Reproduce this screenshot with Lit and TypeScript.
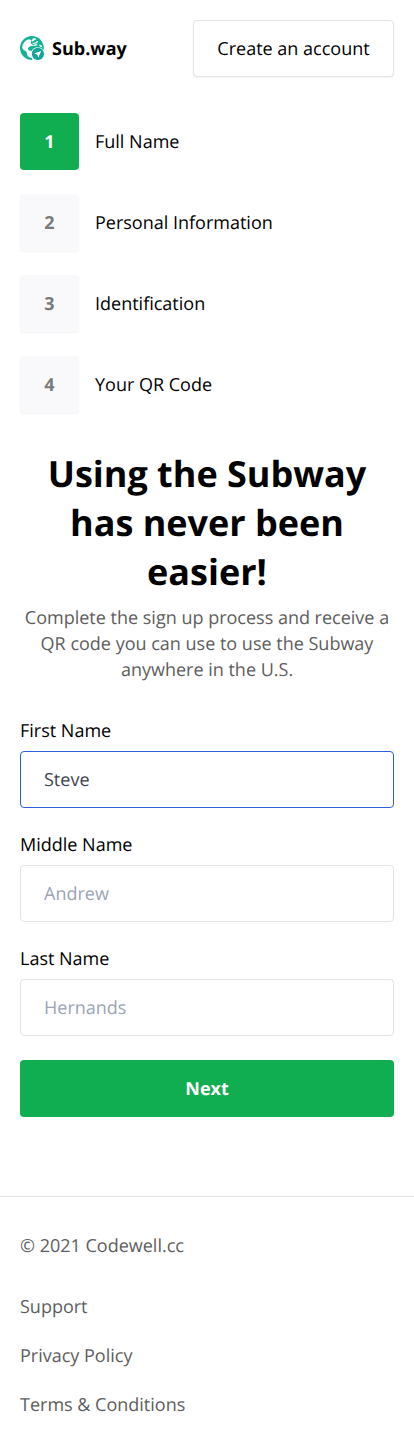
import { LitElement, html, css } from "lit";
import { customElement, state } from "lit/decorators.js";
import { classMap } from "lit/directives/class-map.js";

@customElement("sub-logo")
class SubLogo extends LitElement {
  static styles = css`
    :host {
      display: flex;
      align-items: center;
      gap: 8px;
    }
    .globe {
      display: block;
      width: 24px;
      height: 24px;
      margin-bottom: 1px;
    }
    .name {
      padding-top: 2px;
      font-weight: 700;
    }
  `;

  render() {
    return html`
      <svg class="globe" viewBox="0 0 24 24" aria-hidden="true">
        <path fill="#14b195" d="M12 0A12 12 0 1 0 12 24L12.300 22.600C11.800 21.900 10.800 21.600 9.900 21.500C7.900 20.900 7 19.300 6.900 17.300C6.800 15.800 5.700 15 4.100 14.200C2.500 13.300 1.900 11.700 2.400 10C2.900 7.700 4.100 6.300 5.400 4.900C6.300 4.100 7.600 3.400 8.500 3.400C9.600 3.300 11.300 3.500 11.400 4.300C11 5.600 10.600 6.200 11 7.200C11.500 8.300 13 9.200 14 8.800C15.200 8.200 17 8.200 18.200 8.900C16.900 9.500 15.500 9.400 14.200 9.800C12.300 9.400 10.700 9.800 9 11.100C7.800 12.200 7.700 13.400 8.800 14.300C9.600 14.900 10.800 14.500 11.700 14.900C12.700 12.500 15 11.200 17.700 11.200C20.300 11.200 22.300 12.300 23.600 14.100A12 12 0 0 0 12 0Z"/>
        <path fill="#fff" d="M12.600 2.500L15.200 2.300L16.400 3.200L14.600 3.900L13.200 5.200L11.200 5.500L12.200 4.200ZM17.300 4.800L18.200 5.800L16.900 7.200L13 7.900L12.200 7.100L15.600 6.600ZM18.800 8.600L21.600 9.600L22.300 11.600L20 10.400Z"/>
        <circle cx="17.900" cy="17.900" r="6.100" fill="#14a698"/>
        <path fill="#fff" d="M21.200 14.900L14.100 17.400L17.200 18.400L18.400 21.500Z"/>
      </svg>
      <span class="name">Sub.way</span>
    `;
  }
}

@customElement("step-list")
class StepList extends LitElement {
  @state() private active = 1;
  private steps = ["Full Name", "Personal Information", "Identification", "Your QR Code"];

  static styles = css`
    .list {
      display: grid;
      gap: 24px;
      margin: 0;
      padding: 0;
      list-style: none;
    }
    .step {
      display: flex;
      align-items: center;
      gap: 16px;
      color: #000;
    }
    .label {
      padding-top: 2px;
    }
    .number {
      box-sizing: border-box;
      width: 59px;
      height: 57px;
      padding: 17px 0 15px;
      border-radius: 4px;
      background: #f9f9fc;
      box-shadow: 0 1px 2px rgba(0, 0, 0, 0.05);
      color: #7b7b7b;
      font-weight: 700;
      line-height: 25px;
      text-align: center;
    }
    .number.active {
      background: #11ae51;
      box-shadow: none;
      color: #fff;
    }
  `;

  render() {
    return html`<ol class="list">
      ${this.steps.map(
        (label, i) => html`<li class="step">
          <span class=${classMap({ number: true, active: i + 1 === this.active })}>${i + 1}</span>
          <span class="label">${label}</span>
        </li>`
      )}
    </ol>`;
  }
}

@customElement("app-root")
class AppRoot extends LitElement {
  private fields = [
    { label: "First Name", placeholder: "", value: "Steve", current: true },
    { label: "Middle Name", placeholder: "Andrew", value: "", current: false },
    { label: "Last Name", placeholder: "Hernands", value: "", current: false },
  ];

  static styles = css`
    :host {
      display: block;
      min-height: 1453px;
      background: #fff;
      color: #000;
      font: 400 18px/25px "Open Sans", "Noto Sans", sans-serif;
      text-rendering: geometricPrecision;
    }
    .header {
      display: flex;
      align-items: center;
      justify-content: space-between;
      padding: 20px 20px 36px;
    }
    button {
      box-sizing: border-box;
      height: 57px;
      margin: 0;
      padding: 2px 0 0;
      border-radius: 4px;
      font: inherit;
      text-rendering: inherit;
    }
    .account {
      width: 201px;
      border: 1px solid #e3e4e6;
      background: #fff;
      color: #000;
      box-shadow: 0 1px 2px rgba(0, 0, 0, 0.05);
    }
    .main {
      padding: 0 20px 79px;
    }
    .title {
      margin: 36px 0 9px;
      font-size: 36px;
      font-weight: 700;
      line-height: 49px;
      text-align: center;
    }
    .intro {
      margin: 0 0 36px;
      color: #5d5d5d;
      line-height: 26px;
      text-align: center;
    }
    .form {
      display: grid;
      gap: 25px;
    }
    .field {
      display: grid;
      gap: 7px;
    }
    .input {
      box-sizing: border-box;
      width: 100%;
      height: 57px;
      margin: 0;
      padding: 1px 23px 0;
      border: 1px solid #e3e4e6;
      border-radius: 4px;
      outline: none;
      background: #fff;
      color: #3c4352;
      font: inherit;
      text-rendering: inherit;
    }
    .input::placeholder {
      color: #9ba5b4;
      opacity: 1;
    }
    .current {
      border-color: #2b60dc;
    }
    .next {
      width: 100%;
      margin-top: -1px;
      border: 0;
      background: #11ae51;
      color: #fff;
      font-weight: 700;
    }
    .footer {
      padding: 37px 20px 0;
      border-top: 1px solid #e2e3ea;
      color: #5d5d5d;
    }
    .links {
      display: grid;
      gap: 24px;
      padding-top: 36px;
    }
    .link {
      color: inherit;
      text-decoration: none;
    }
  `;

  render() {
    return html`
      <header class="header">
        <sub-logo></sub-logo>
        <button class="account">Create an account</button>
      </header>
      <main class="main">
        <step-list></step-list>
        <h1 class="title">Using the Subway has never been easier!</h1>
        <p class="intro">
          Complete the sign up process and receive a QR code you can use to use the Subway anywhere in the U.S.
        </p>
        <form class="form" @submit=${(e: Event) => e.preventDefault()}>
          ${this.fields.map(
            (f) => html`<label class="field">
              <span>${f.label}</span>
              <input
                class=${classMap({ input: true, current: f.current })}
                .value=${f.value}
                placeholder=${f.placeholder}
              />
            </label>`
          )}
          <button class="next">Next</button>
        </form>
      </main>
      <footer class="footer">
        <div>© 2021 Codewell.cc</div>
        <nav class="links">
          <a class="link" href="#">Support</a>
          <a class="link" href="#">Privacy Policy</a>
          <a class="link" href="#">Terms &amp; Conditions</a>
        </nav>
      </footer>
    `;
  }
}
